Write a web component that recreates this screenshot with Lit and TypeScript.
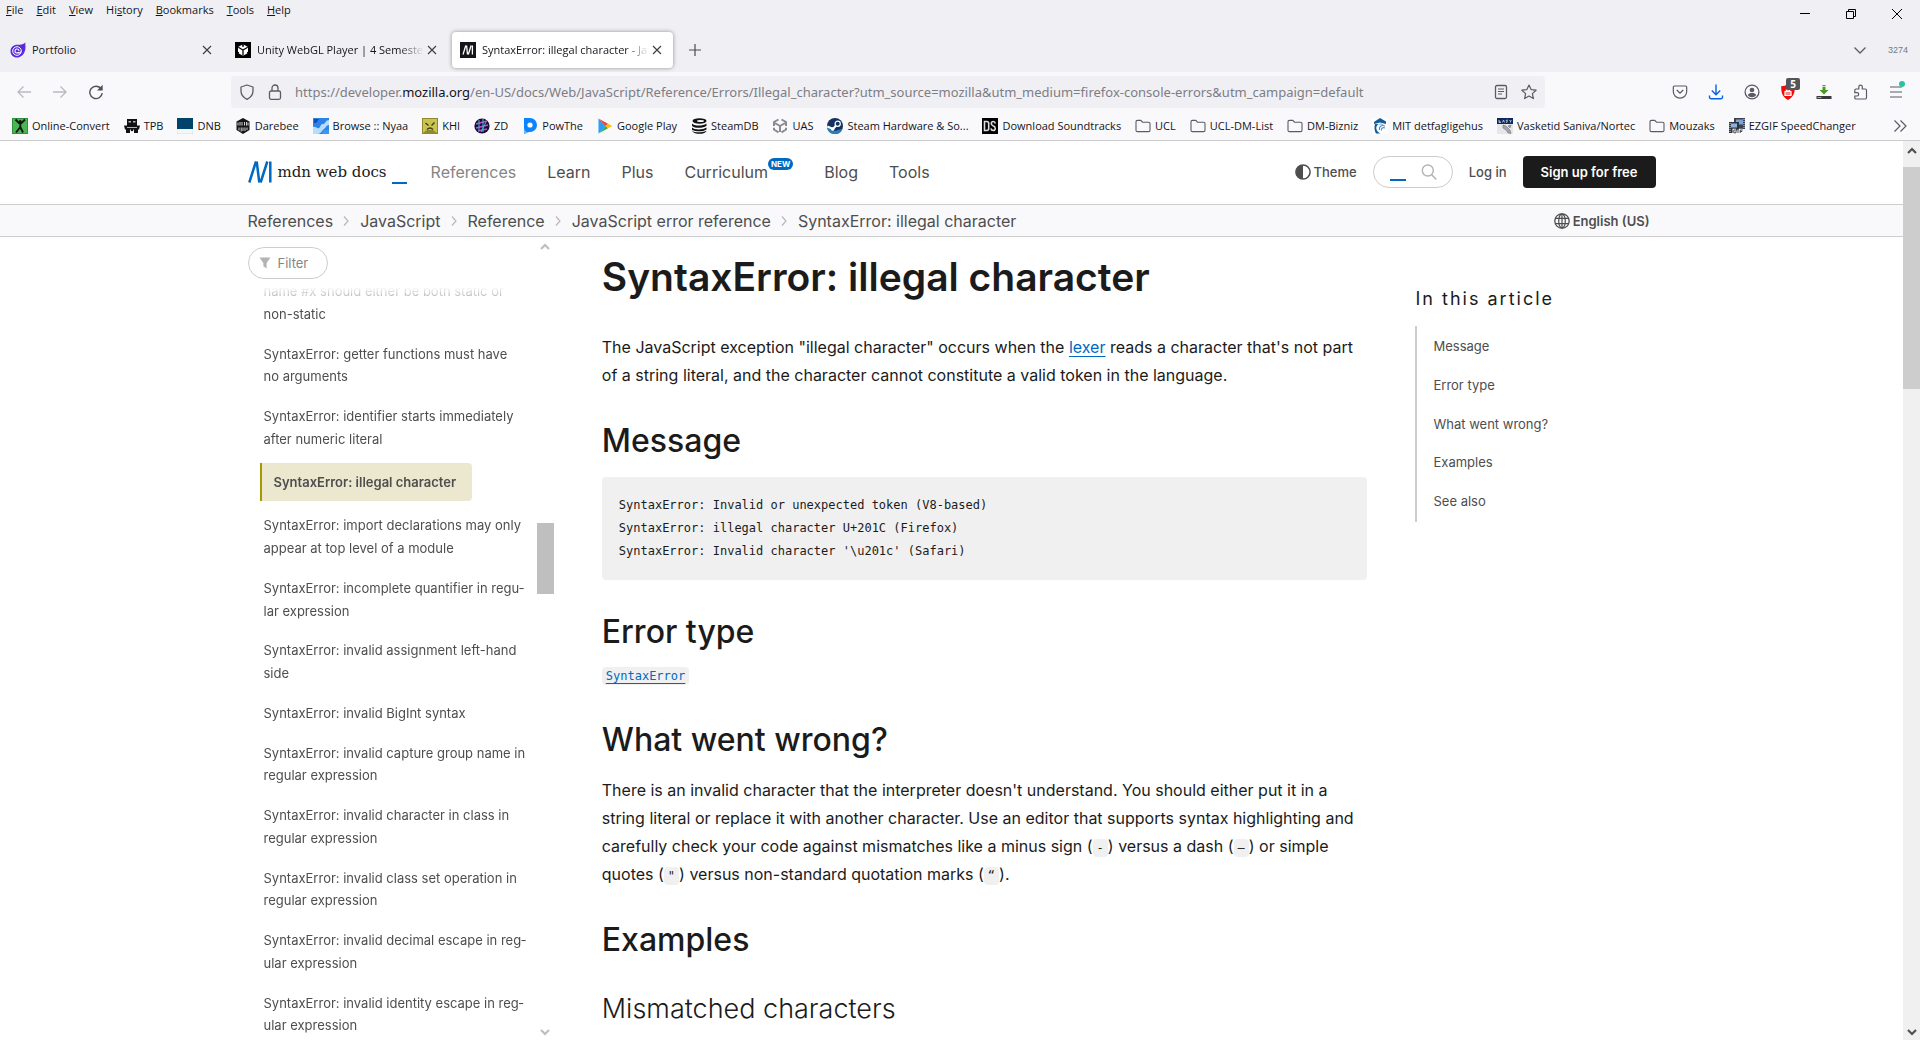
import { LitElement, html, css, svg, nothing } from "lit";
import { customElement } from "lit/decorators.js";

/* Site icons, all drawn on a 16 by 16 grid. */
const folder = svg`<path d="M1 3.8c0-.9.6-1.4 1.4-1.4h3.4l1.7 1.8h6.1c.8 0 1.4.6 1.4 1.4v6.6c0 .8-.6 1.4-1.4 1.4H2.4c-.8 0-1.4-.6-1.4-1.4z" fill="none" stroke="#5b5b66" stroke-width="1.1"/>`;
const icons: Record<string, unknown> = {
  portfolio: svg`<path d="M15.5.5c-.6 2 .6 4.600-.4 7.700C14.100 12.500 10.800 15.500 7 15.500 3.300 15.500.500 12.700.500 9.200.500 5.500 3.500 2.800 7.200 2.800 10.500 2.800 13 2.800 15.500.5z" fill="#5b2bd9"/><circle cx="7" cy="9" r="4.300" fill="none" stroke="#fff" stroke-width="1"/><path d="M9 9a2 2 0 1 0-.7 1.500c.8.8 2 .3 2.300-.8" fill="none" stroke="#fff" stroke-width="1.100"/>`,
  unity: svg`<rect width="16" height="16" fill="#000"/><path d="M8 2.300 13 5v6l-5 2.800L3 11V5z" fill="#fff"/><path d="M8 8v5.500M8 8 3.300 5.300M8 8l4.700-2.700" stroke="#000" stroke-width="1.300"/><path d="M7.200 2h1.600v2.500L8 5 7.200 4.500zM2.500 9.500l1.500.8v1.500L2.500 11zM13.500 9.500l-1.500.8v1.500l1.500-.8z" fill="#000"/>`,
  mdn: svg`<rect width="16" height="16" fill="#15141a"/><path d="M3 12.500 5.800 3.500M6.600 3.500l.9 9M8.300 12.500l2.800-9M12.400 3.500v9" stroke="#fff" stroke-width="1.300"/>`,
  convert: svg`<rect width="16" height="16" fill="#2f8f3a"/><rect x="1" y="1" width="14" height="14" fill="#4bb553"/><path d="M3.500 1.500 7 5h2.500L13 1.500M8.300 5v5M8 9.500 4 14.500M8.500 9.500l2.500 5" stroke="#0d1a0d" stroke-width="1.900" fill="none"/><circle cx="8.300" cy="3.300" r="1.300" fill="#0d1a0d"/>`,
  tpb: svg`<path d="M3 1h10v7H3z" fill="#111"/><path d="M4.500 3h2.500v1.500h-2.500zM9 3h2.500v1.500H9z" fill="#bbb"/><path d="M0 7.500h16l-1 4H1zM2 11h4v4H2zM10 11h4v4h-4z" fill="#111"/><path d="M3 9.500h10" stroke="#ddd" stroke-width=".8"/><circle cx="8" cy="12" r="1.300" fill="#111"/>`,
  dnb: svg`<rect width="16" height="16" fill="#f4f6f8"/><rect width="16" height="11" fill="#00446b"/><path d="M0 11v5h16v-5" fill="none" stroke="#c8d3dc" stroke-width=".6"/>`,
  darebee: svg`<path d="M8 0l6.500 3.500v8.500L8 16l-6.500-4V3.500z" fill="#151515"/><path d="M3 4.500v3M5 4v3.500M7 4v3.500M9.500 4v3.500M11.500 4v3.500M13 4.500v3M4 9.500v3M6.200 9.500v4M8 9.500v3.500M10 9.500v3.500M12 9.500v2.500" stroke="#e6e6e6" stroke-width=".9"/>`,
  nyaa: svg`<rect width="16" height="16" fill="#2b83e6"/><path d="M0 9c3-1 4 2 6 1s1-4 4-4 2-4 6-4v5c-3 0-3 3-5 4s-3 5-6 5H0z" fill="#b8dcff"/><path d="M1 1h5l-3 4H1z" fill="#0c4fb5"/><path d="M10 12h6v4h-7z" fill="#3b96f2"/>`,
  khi: svg`<rect width="16" height="16" fill="#8e8b2e"/><rect x="1" y="1" width="14" height="14" fill="#c9c452"/><path d="M3.500 5 6.500 7.500M12.500 4.500l-3 3M5 11.500c2-2 4-2 6 0" stroke="#3c3a10" stroke-width="1.300" fill="none"/><path d="M1 15l4-3h6l4 3z" fill="#8e8b2e"/>`,
  zd: svg`<circle cx="8" cy="8" r="7.600" fill="#16122b"/><path d="M2 6 13 3M2 10 14 7M4 13 13 11" stroke="#c04ad8" stroke-width="1.600"/><path d="M5 2v11M9 1v13M12 4 7 14" stroke="#41b8d6" stroke-width="1"/>`,
  powthe: svg`<path d="M2 0h6a7 7 0 0 1 0 14H6.500L2 16z" fill="#0a84ff"/><path d="M2 9c0 3 2 5 5 5l-5 2z" fill="#62b5ff"/><circle cx="8" cy="7" r="2.600" fill="#fff"/>`,
  play: svg`<path d="M1.500.5 8.500 8l-7 7.500z" fill="#2a9df4"/><path d="M1.500.5 11 5.700 8.500 8z" fill="#ea4335"/><path d="M1.500 15.500 11 10.300 8.500 8z" fill="#34a853"/><path d="M11 5.700 15.200 8 11 10.300 8.500 8z" fill="#fbbc04"/>`,
  steamdb: svg`<ellipse cx="8.500" cy="3" rx="7" ry="2.700" fill="#111"/><path d="M1 5.500c1 2.400 11 3 14.500 0v2.300C12 10.500 4 10.500 1 8zM1 9.500c2 2.500 11 2.500 14.500 0v2c-3.500 2.300-10 2.500-14.500.5zM1 13c3 1.700 10 1.700 14.500-.3-1 4-12 4.300-14.500.3z" fill="#111"/><ellipse cx="9.500" cy="3" rx="3.500" ry="1" fill="#f9f9fb"/>`,
  uas: svg`<path d="M8 8v6M8 8 2.800 5M8 8l5.200-3" stroke="#8b8b8f" stroke-width="2"/><path d="M6.500 1.500 2 4v4M9.500 1.500 14 4v4M2 9.800v1.700l4.500 2.800M14 9.800v1.700l-4.500 2.800" fill="none" stroke="#8b8b8f" stroke-width="2"/>`,
  steam: svg`<circle cx="8" cy="8" r="8" fill="#14315f"/><path d="M0 9a8 8 0 0 0 15.500 1.800L8 13z" fill="#2b7fb8"/><path d="M.3 8.500 6 11l4-4.500" stroke="#fff" stroke-width="2" fill="none"/><circle cx="10.700" cy="5.700" r="2.600" fill="#14315f" stroke="#fff" stroke-width="1.200"/><circle cx="5.700" cy="11" r="1.800" fill="#fff"/>`,
  ds: svg`<rect width="16" height="16" fill="#000"/><path d="M2.500 3.500h2.200c1.400 0 2 .8 2 2v5c0 1.200-.6 2-2 2H2.500zM13.300 5.500c-.3-1.300-1-2-2-2-2.600 0-2.600 3.600-.3 4.300 3 .8 3 4.700.2 4.700-1.300 0-2-.7-2.300-2" fill="none" stroke="#ddd" stroke-width="1.600"/>`,
  folder,
  mit: svg`<rect width="16" height="16" fill="#fff"/><path d="M2 4 8 0l6 3.500V6L8 4.500 2 6z" fill="#0f5c9c"/><path d="M12 6.500C8 4.500 4 7 4.300 10.500c.2 2 1.700 3.800 4 5L4 15.500C2.500 13 2 9 3 6z" fill="#0f5c9c"/><path d="M13 8C9.500 6.500 6.500 9 7.500 12M13 10c-2-1-4 .3-3.600 2.500" stroke="#4e8fc4" fill="none" stroke-width="1.200"/>`,
  easy: svg`<rect width="16" height="16" fill="#e5e7ea"/><rect width="16" height="6" fill="#10295c"/><path d="M2 2v2.500h2M2 3.300h1.500M5.500 4.500 6.500 2l1 2.500M11 2 9 2.500l1.500 1.500L9 4.500M12.500 2l1 1.200L14.500 2M13.500 3v1.500" stroke="#dfe6f3" stroke-width=".7" fill="none"/><path d="M6 7l3 1 4 4 1 3.500-3-.5-2-3-3-2zM11 8l3-1-1 3z" fill="#a2a6ac" stroke="#666" stroke-width=".5"/>`,
  ezgif: svg`<rect x="5" y="0" width="11" height="11" fill="#39424e"/><rect x="7" y="1.500" width="7" height="5" fill="#7fa3d4"/><rect x="0" y="4" width="10" height="11" fill="#2c343f"/><rect x="2" y="5.500" width="6" height="4" fill="#8fb0db"/><path d="M1 5v9M15 1v9" stroke="#dfe5ee" stroke-width="1" stroke-dasharray="1 1"/><path d="M7 12H4.800v2.800H7v-1.300M9 11.700v3.300M11.200 15v-3h2.500M11.200 13.500h2" stroke="#fff" stroke-width="2.600" fill="none"/><path d="M7 12H4.800v2.800H7v-1.300M9 11.700v3.300M11.200 15v-3h2.500M11.200 13.500h2" stroke="#333" stroke-width=".9" fill="none"/>`,
  close: svg`<path d="M4 4l8 8M12 4l-8 8" stroke="#3b3b44" stroke-width="1.100" fill="none"/>`,
  plus: svg`<path d="M8 2v12M2 8h12" stroke="#4a4a55" stroke-width="1.200"/>`,
  back: svg`<path d="M15 8H2M7.500 2.500 2 8l5.500 5.500" stroke="#b9b9c0" stroke-width="1.300" fill="none"/>`,
  forward: svg`<path d="M1 8h13M8.500 2.500 14 8l-5.500 5.500" stroke="#b9b9c0" stroke-width="1.300" fill="none"/>`,
  reload: svg`<path d="M13.200 5A6.200 6.200 0 1 0 14.200 9" stroke="#4f4f59" stroke-width="1.400" fill="none"/><path d="M14.700.8v5.700H9z" fill="#4f4f59"/>`,
  shield: svg`<path d="M8 1 14 3v4c0 4-2.300 6.500-6 8.300C4.300 13.500 2 11 2 7V3z" stroke="#5b5b66" stroke-width="1.300" fill="none" stroke-linejoin="round"/>`,
  lock: svg`<rect x="2.500" y="7" width="11" height="8.300" rx="1.500" stroke="#5b5b66" stroke-width="1.300" fill="none"/><path d="M5 7V4a3 3 0 0 1 6 0v3" stroke="#5b5b66" stroke-width="1.300" fill="none"/>`,
  reader: svg`<rect x="2.500" y="1.500" width="11" height="13" rx="1.500" stroke="#5b5b66" stroke-width="1.300" fill="none"/><path d="M5 5h6M5 7.500h6M5 10h4" stroke="#5b5b66" stroke-width="1.100"/>`,
  star: svg`<path d="M8 1l2.100 4.600 5 .6-3.700 3.400 1 5L8 12.100l-4.400 2.500 1-5L.900 6.200l5-.6z" stroke="#5b5b66" stroke-width="1.200" fill="none" stroke-linejoin="round"/>`,
  pocket: svg`<path d="M2.500 2h11c.8 0 1.200.5 1.200 1.200V7.500A6.700 6.700 0 0 1 8 14.200 6.700 6.700 0 0 1 1.300 7.500V3.200C1.300 2.500 1.700 2 2.500 2z" stroke="#5b5b66" stroke-width="1.200" fill="none"/><path d="M4.800 6 8 9.200 11.200 6" stroke="#5b5b66" stroke-width="1.300" fill="none"/>`,
  download: svg`<path d="M8 .5v10M3.800 6.500 8 10.700l4.200-4.200M1.500 11.500v1.800c0 .8.600 1.400 1.400 1.400h10.200c.8 0 1.400-.6 1.400-1.400v-1.800" stroke="#0561e6" stroke-width="1.400" fill="none"/>`,
  account: svg`<circle cx="8" cy="8" r="6.900" stroke="#5b5b66" stroke-width="1.300" fill="none"/><circle cx="8" cy="6" r="2.300" fill="#5b5b66"/><path d="M3.800 11.200c.6-1.600 2-2.200 4.200-2.200s3.600.6 4.200 2.200A5.500 5.500 0 0 1 8 13.300a5.500 5.500 0 0 1-4.200-2.100z" fill="#5b5b66"/>`,
  ublock: svg`<path d="M8 0c2 1.700 4.500 2.200 6.800 2.200 0 6.500-.8 10.300-6.800 13.800C2 12.500 1.200 8.700 1.200 2.200 3.500 2.200 6 1.700 8 0z" fill="#f00a0a"/><path d="M5 7.500h6v4H5zM6.300 7.500V6h3.400v1.500" stroke="#fff" stroke-width="1.200" fill="#fff" fill-opacity=".5"/>`,
  dlgreen: svg`<path d="M6.500 1h3v1.200h-3zM6.500 3h3v3h3L8 10.500 3.500 6h3z" fill="#4c9a1f"/><rect x=".5" y="12" width="15" height="3" fill="#38383d"/><path d="M1.500 13.500h4" stroke="#aaa" stroke-width="1"/>`,
  puzzle: svg`<path d="M6.800 5V2.700c0-2.200 3.500-2.200 3.500 0V5h3c.7 0 1.200.5 1.200 1.200v7.600c0 .7-.5 1.200-1.200 1.200H4c-.7 0-1.200-.5-1.200-1.200V12h2.300c2.100 0 2.100-3.300 0-3.300H2.800V6.200C2.800 5.500 3.300 5 4 5z" stroke="#5b5b66" stroke-width="1.200" fill="none"/>`,
  menu: svg`<path d="M2 3h12M2 8h12M2 13h12" stroke="#5b5b66" stroke-width="1.200"/>`,
  down: svg`<path d="M2.500 5.500 8 11l5.500-5.500" stroke="#5b5b66" stroke-width="1.300" fill="none"/>`,
  more: svg`<path d="M2.500 2.500 8 8l-5.500 5.500M8.500 2.500 14 8l-5.500 5.500" stroke="#5b5b66" stroke-width="1.200" fill="none"/>`,
  min: svg`<path d="M3 7.500h10" stroke="#000"/>`,
  restore: svg`<path d="M3.500 5.500h7v7h-7zM5.500 5.500v-2h7v7h-2" stroke="#000" fill="none"/>`,
  winclose: svg`<path d="M3 3l10 10M13 3 3 13" stroke="#000" stroke-width="1" fill="none"/>`,
  theme: svg`<circle cx="8" cy="8" r="7.100" stroke="#4e4e4e" stroke-width="1.500" fill="none"/><path d="M8 1a7 7 0 0 0 0 14z" fill="#4e4e4e"/>`,
  search: svg`<circle cx="6.800" cy="6.500" r="5.500" stroke="#b3b3b3" stroke-width="1.400" fill="none"/><path d="M10.700 10.700 15.300 15.500" stroke="#b3b3b3" stroke-width="1.500"/>`,
  globe: svg`<circle cx="8" cy="8" r="7.200" stroke="#4e4e4e" stroke-width="1.300" fill="none"/><ellipse cx="8" cy="8" rx="3.300" ry="7.200" stroke="#4e4e4e" stroke-width="1.200" fill="none"/><path d="M8 1v14M1.500 5.300h13M1.500 10.700h13" stroke="#4e4e4e" stroke-width="1.200"/>`,
  funnel: svg`<path d="M2.500 2.500h11L9.600 8v5.500L6.400 11.200V8z" fill="#b3b3b3"/>`,
  crumb: svg`<path d="M6 3.500 10 8l-4 4.500" stroke="#b8b8b8" stroke-width="1.200" fill="none"/>`,
  up: svg`<path d="M4 11l4-4 4 4" stroke="currentColor" stroke-width="2.200" fill="none"/>`,
  dn: svg`<path d="M4 6l4 4 4-4" stroke="currentColor" stroke-width="2.200" fill="none"/>`,
};
const icon = (name: string) =>
  html`<svg class="icon" width="16" height="16" viewBox="0 0 16 16" aria-hidden="true">${icons[name]}</svg>`;

const base = css`
  *, *::before, *::after { box-sizing: border-box; }
  button { border: 0; padding: 0; background: none; font: inherit; color: inherit; }
  a { color: inherit; text-decoration: none; }
  ul, ol { list-style: none; margin: 0; padding: 0; }
  .icon { display: block; flex: none; }
`;

@customElement("browser-chrome")
export class BrowserChrome extends LitElement {
  static styles = [base, css`
    :host { display: block; font: 11px/16px "Open Sans", "Segoe UI", sans-serif; color: #15141a; border-bottom: 1px solid #ccc; }
    .top { background: #f0f0f4; height: 72px; display: flex; flex-direction: column; }
    .titlebar { display: flex; justify-content: space-between; height: 28px; }
    .menus { display: flex; gap: 13px; padding: 2px 6px; align-items: flex-start; }
    .window { display: flex; align-items: center; gap: 30px; padding-right: 15px; }
    .tabrow { display: flex; align-items: center; justify-content: space-between; padding: 4px 12px 4px 2px; }
    .tabs { display: flex; gap: 4px; align-items: center; }
    .tab { width: 221px; height: 36px; display: flex; align-items: center; padding: 0 8px; border-radius: 4px; gap: 6px; }
    .tab.selected { background: #fff; box-shadow: 0 0 4px rgba(0, 0, 0, .4); }
    .tab .label { flex: 1; overflow: hidden; white-space: nowrap; }
    .tab .label.long { mask-image: linear-gradient(to left, transparent, #000 24px); }
    .tab .shut { margin-left: -6px; }
    .new { margin-left: 10px; }
    .tabtools { display: flex; align-items: center; gap: 20px; }
    .counter { font: 9px/12px "Liberation Sans Narrow", "Liberation Sans", sans-serif; color: #77777f; }
    .nav { background: #f9f9fb; display: grid; grid-template-columns: 215px minmax(0, 1fr) 343px; gap: 16px; padding: 4px 16px 4px 0; height: 40px; align-items: center; }
    .history { display: flex; gap: 20px; padding-left: 16px; }
    .tools { display: flex; justify-content: space-between; padding-left: 111px; }
    .url { background: #f0f0f4; border-radius: 4px; height: 32px; display: flex; align-items: center; gap: 12px; padding: 0 8px; color: #7d7d84; font-family: "Noto Sans", sans-serif; font-size: 13px; }
    .address { flex: 1; min-width: 0; overflow: hidden; white-space: nowrap; outline: 0; }
    .address b { font-weight: 400; color: #15141a; }
    .badged { position: relative; }
    .count { position: absolute; left: 6px; top: -6px; width: 14px; height: 12px; border-radius: 2px; background: #55555a; color: #fff; font: 700 10px/12px "Open Sans", sans-serif; text-align: center; }
    .dot { position: absolute; right: -1px; top: -3px; width: 6px; height: 6px; border-radius: 50%; background: #2ac3a2; }
    .marks { background: #f9f9fb; display: flex; align-items: center; justify-content: space-between; height: 28px; padding: 0 12px; }
    .marks ul { display: flex; flex: 1; justify-content: space-between; margin-right: 36px; }
    .marks li a { display: flex; align-items: center; gap: 4px; white-space: nowrap; }
  `];
  private menus = [["", "F", "ile"], ["", "E", "dit"], ["", "V", "iew"], ["Hi", "s", "tory"], ["", "B", "ookmarks"], ["", "T", "ools"], ["", "H", "elp"]];
  private tabs = [
    { icon: "portfolio", label: "Portfolio" },
    { icon: "unity", label: "Unity WebGL Player | 4 Semester", long: true },
    { icon: "mdn", label: "SyntaxError: illegal character - JavaScript | MDN", long: true, selected: true },
  ];
  private marks = [
    ["convert", "Online-Convert"], ["tpb", "TPB"], ["dnb", "DNB"], ["darebee", "Darebee"], ["nyaa", "Browse :: Nyaa"], ["khi", "KHI"],
    ["zd", "ZD"], ["powthe", "PowThe"], ["play", "Google Play"], ["steamdb", "SteamDB"], ["uas", "UAS"], ["steam", "Steam Hardware & So..."],
    ["ds", "Download Soundtracks"], ["folder", "UCL"], ["folder", "UCL-DM-List"], ["folder", "DM-Bizniz"], ["mit", "MIT detfagligehus"],
    ["easy", "Vasketid Saniva/Nortec"], ["folder", "Mouzaks"], ["ezgif", "EZGIF SpeedChanger"],
  ];
  private tool(name: string, label: string, extra: unknown = nothing) {
    return html`<button class="badged" aria-label=${label}>${icon(name)}${extra}</button>`;
  }
  render() {
    return html`
      <div class="top">
        <div class="titlebar">
          <div class="menus">${this.menus.map(([a, b, c]) => html`<button>${a}<u>${b}</u>${c}</button>`)}</div>
          <div class="window">${this.tool("min", "Minimize")}${this.tool("restore", "Restore")}${this.tool("winclose", "Close")}</div>
        </div>
        <div class="tabrow">
          <div class="tabs">
            ${this.tabs.map(t => html`<div class="tab ${t.selected ? "selected" : ""}">${icon(t.icon)}<span class="label ${t.long ? "long" : ""}">${t.label}</span><button class="shut" aria-label="Close tab">${icon("close")}</button></div>`)}
            <button class="new" aria-label="New tab">${icon("plus")}</button>
          </div>
          <div class="tabtools">${this.tool("down", "List all tabs")}<span class="counter">3274</span></div>
        </div>
      </div>
      <div class="nav">
        <div class="history">${this.tool("back", "Back")}${this.tool("forward", "Forward")}${this.tool("reload", "Reload")}</div>
        <div class="url">
          ${icon("shield")}${icon("lock")}
          <div class="address" role="textbox" aria-label="Address" contenteditable="true" spellcheck="false">https://developer.<b>mozilla.org</b>/en-US/docs/Web/JavaScript/Reference/Errors/Illegal_character?utm_source=mozilla&amp;utm_medium=firefox-console-errors&amp;utm_campaign=default</div>
          ${this.tool("reader", "Reader view")}${this.tool("star", "Bookmark this page")}
        </div>
        <div class="tools">
          ${this.tool("pocket", "Save to Pocket")}${this.tool("download", "Downloads")}${this.tool("account", "Account")}
          ${this.tool("ublock", "Content blocker", html`<span class="count">5</span>`)}
          ${this.tool("dlgreen", "Download helper")}${this.tool("puzzle", "Extensions")}
          ${this.tool("menu", "Application menu", html`<span class="dot"></span>`)}
        </div>
      </div>
      <nav class="marks" aria-label="Bookmarks">
        <ul>${this.marks.map(([i, t]) => html`<li><a href="#">${icon(i)}${t}</a></li>`)}</ul>
        ${this.tool("more", "More bookmarks")}
      </nav>`;
  }
}

@customElement("scroll-bar")
export class ScrollBar extends LitElement {
  static properties = { before: { type: Number }, thumb: { type: Number }, after: { type: Number } };
  declare before: number;
  declare thumb: number;
  declare after: number;
  static styles = [base, css`
    :host { display: flex; flex-direction: column; width: 17px; color: #505050; background: #f0f0f0; --thumb: #cdcdcd; }
    :host([quiet]) { color: #bfbfbf; background: none; --thumb: #bfbfbf; }
    .arrow { height: 17px; display: grid; place-items: center; }
    .thumb { background: var(--thumb); }
  `];
  render() {
    return html`<div class="arrow">${icon("up")}</div>
      <div style="flex:${this.before}"></div><div class="thumb" style="flex:${this.thumb}"></div><div style="flex:${this.after}"></div>
      <div class="arrow">${icon("dn")}</div>`;
  }
}

@customElement("site-header")
export class SiteHeader extends LitElement {
  static styles = [base, css`
    :host { display: block; font: 16px/28px Inter, sans-serif; color: #4e4e4e; }
    .wrap { max-width: 1440px; margin: 0 auto; padding: 0 16px; display: flex; align-items: center; justify-content: space-between; }
    .main { border-bottom: 1px solid #cdcdcd; background: #fff; }
    .main .wrap { height: 63px; padding-bottom: 1px; }
    .crumbs { border-bottom: 1px solid #cdcdcd; background: #f9f9fb; }
    .crumbs .wrap { height: 31px; padding-right: 22px; }
    .left, .links, .right, .trail { display: flex; align-items: center; }
    .left { gap: 24px; }
    .logo { display: flex; align-items: center; color: #1b1b1b; font: 15px/24px "DejaVu Serif", serif; gap: 6px; }
    .word { display: flex; align-items: flex-end; }
    .under { width: 15px; height: 2px; background: #0069c2; margin-left: 5px; }
    .links { gap: 31px; }
    .links a { display: flex; align-items: flex-start; }
    .links .current { color: #858585; }
    .new { background: #0069c2; color: #fff; font: 700 8px/12px Inter, sans-serif; padding: 0 3px; border-radius: 6px; }
    .right { gap: 16px; font-size: 13px; font-weight: 500; }
    .right button, .lang { display: flex; align-items: center; gap: 3px; }
    .search { display: flex; align-items: center; width: 80px; height: 32px; border: 1px solid #cdcdcd; border-radius: 16px; padding: 0 15px 0 16px; position: relative; }
    .search input { flex: 1; min-width: 0; border: 0; background: none; outline: 0; padding: 0; }
    .caret { position: absolute; left: 16px; bottom: 6px; width: 16px; height: 2px; background: #0069c2; }
    .right .signup { background: #1b1b1b; color: #fff; font-weight: 600; height: 32px; padding: 0 18px; border-radius: 4px; }
    .trail { gap: 5px; }
    .trail li { display: flex; align-items: center; gap: 6px; }
    .lang { font-size: 13px; font-weight: 600; }
  `];
  render() {
    const trail = ["References", "JavaScript", "Reference", "JavaScript error reference", "SyntaxError: illegal character"];
    return html`
      <header class="main"><div class="wrap">
        <div class="left">
          <a class="logo" href="#">
            <svg width="24" height="22" viewBox="0 0 24 22" aria-hidden="true"><path d="M1.300 21.500 8 .5M8.700.5l2.600 21M12.600 21.500l6.700-21M22.300.5v21" stroke="#0069c2" stroke-width="2.500" fill="none"/></svg>
            <span class="word">mdn web docs<span class="under"></span></span>
          </a>
          <nav class="links">
            <a class="current" href="#">References</a><a href="#">Learn</a><a href="#">Plus</a>
            <a href="#">Curriculum<span class="new">NEW</span></a><a href="#">Blog</a><a href="#">Tools</a>
          </nav>
        </div>
        <div class="right">
          <button>${icon("theme")}Theme</button>
          <label class="search"><input type="search" aria-label="Search MDN"><span class="caret"></span>${icon("search")}</label>
          <a href="#">Log in</a>
          <button class="signup">Sign up for free</button>
        </div>
      </div></header>
      <div class="crumbs"><div class="wrap">
        <ol class="trail">${trail.map((t, i) => html`<li>${i ? icon("crumb") : nothing}<a href="#">${t}</a></li>`)}</ol>
        <button class="lang">${icon("globe")}English (US)</button>
      </div></div>`;
  }
}

@customElement("error-sidebar")
export class ErrorSidebar extends LitElement {
  static styles = [base, css`
    :host { display: flex; min-height: 0; font: 13px/1.75 Inter, sans-serif; color: #4e4e4e; }
    .body { flex: 1; min-width: 0; display: flex; flex-direction: column; overflow: hidden; padding-top: 10px; }
    .filter { flex: none; width: 80px; height: 32px; display: flex; align-items: center; gap: 5px; border: 1px solid #cdcdcd; border-radius: 16px; padding: 0 8px; }
    .filter input { width: 100%; min-width: 0; border: 0; padding: 0; outline: 0; background: none; font: inherit; }
    .filter input::placeholder { color: #858585; opacity: 1; }
    .list { flex: 1; min-height: 0; overflow: hidden; padding: 0 6px 0 16px; mask-image: linear-gradient(transparent 8px, #000 32px); }
    li { padding: 8px 0; margin-bottom: 1px; }
    li:first-child { padding-top: 1px; }
    li.current { width: fit-content; margin: 4px 0 5px -4px; padding: 8px 16px 8px 12px; border-left: 2px solid #a39b00; border-radius: 0 4px 4px 0; background: #ece8cf; font-weight: 600; }
  `];
  private entries = [
    "name #x should either be both static or non-static",
    "SyntaxError: getter functions must have no\u00a0arguments",
    "SyntaxError: identifier starts immediately after numeric literal",
    "SyntaxError: illegal character",
    "SyntaxError: import declarations may only appear at top level of a module",
    "SyntaxError: incomplete quantifier in regu\u00adlar expression",
    "SyntaxError: invalid assignment left-hand side",
    "SyntaxError: invalid BigInt syntax",
    "SyntaxError: invalid capture group name in regular expression",
    "SyntaxError: invalid character in class in regular expression",
    "SyntaxError: invalid class set operation in regular expression",
    "SyntaxError: invalid decimal escape in reg\u00adular expression",
    "SyntaxError: invalid identity escape in reg\u00adular expression",
  ];
  render() {
    return html`
      <div class="body">
        <label class="filter">${icon("funnel")}<input type="text" placeholder="Filter" aria-label="Filter"></label>
        <ul class="list">${this.entries.map((t, i) => html`<li class=${i === 3 ? "current" : ""}><a href="#">${t}</a></li>`)}</ul>
      </div>
      <scroll-bar quiet before="269" thumb="71" after="429"></scroll-bar>`;
  }
}

@customElement("doc-article")
export class DocArticle extends LitElement {
  static styles = [base, css`
    :host { display: block; min-width: 0; padding-top: 16px; font: 16px/28px Inter, sans-serif; color: #1b1b1b; }
    h1, h2, h3, p, pre { margin: 0; }
    h1 { font-size: 39px; line-height: 48px; font-weight: 600; margin-bottom: 32px; }
    h2 { font-size: 32px; line-height: 40px; font-weight: 500; margin: 32px 0 16px; }
    h3 { font-size: 27px; line-height: 34px; font-weight: 300; margin-top: 32px; }
    pre, code { font-family: "DejaVu Sans Mono", Consolas, monospace; background: #f0f0f0; border-radius: 4px; }
    pre { font-size: 12px; line-height: 23px; padding: 17px; }
    code { font-size: 12px; line-height: 16px; padding: 2px 4px; }
    a { color: #0069c2; text-decoration: underline; text-underline-offset: 3px; }
    .type { margin-top: -8px; }
  `];
  render() {
    return html`
      <h1>SyntaxError: illegal character</h1>
      <p>The JavaScript exception "illegal character" occurs when the <a href="#">lexer</a> reads a character that's not part of a string literal, and the character cannot constitute a valid token in the language.</p>
      <h2>Message</h2>
      <pre>${["SyntaxError: Invalid or unexpected token (V8-based)", "SyntaxError: illegal character U+201C (Firefox)", "SyntaxError: Invalid character '\\u201c' (Safari)"].join("\n")}</pre>
      <h2>Error type</h2>
      <p class="type"><code><a href="#">SyntaxError</a></code></p>
      <h2>What went wrong?</h2>
      <p>There is an invalid character that the interpreter doesn't understand. You should either put it in a string literal or replace it with another character. Use an editor that supports syntax highlighting and carefully check your code against mismatches like a minus sign (<code>-</code>) versus a dash (<code>–</code>) or simple quotes (<code>"</code>) versus non-standard quotation marks (<code>“</code>).</p>
      <h2>Examples</h2>
      <h3>Mismatched characters</h3>`;
  }
}

@customElement("article-toc")
export class ArticleToc extends LitElement {
  static styles = [base, css`
    :host { display: block; padding-top: 48px; font: 13px/1.75 Inter, sans-serif; color: #4e4e4e; }
    h2 { margin: 0 0 13px; font-size: 18px; line-height: 28px; font-weight: 400; letter-spacing: 2px; color: #1b1b1b; }
    ul { border-left: 2px solid #cdcdcd; padding: 1px 0; }
    li { padding: 8px 16px; }
  `];
  render() {
    return html`<h2>In this article</h2>
      <ul>${["Message", "Error type", "What went wrong?", "Examples", "See also"].map(t => html`<li><a href="#">${t}</a></li>`)}</ul>`;
  }
}

@customElement("app-root")
export class AppRoot extends LitElement {
  static styles = [base, css`
    :host { display: flex; flex-direction: column; height: 100vh; overflow: hidden; background: #fff; }
    browser-chrome { flex: none; }
    .view { flex: 1; min-height: 0; display: flex; }
    .page { flex: 1; min-width: 0; display: flex; flex-direction: column; overflow: hidden; }
    site-header { flex: none; }
    .columns { flex: 1; min-height: 0; width: 100%; max-width: 1440px; margin: 0 auto; padding: 0 16px; display: grid; grid-template-columns: minmax(0, 1fr) minmax(0, 2.5fr) 240px; grid-template-rows: minmax(0, 1fr); gap: 48px; }
  `];
  render() {
    return html`
      <browser-chrome></browser-chrome>
      <div class="view">
        <div class="page">
          <site-header></site-header>
          <div class="columns">
            <error-sidebar></error-sidebar>
            <doc-article></doc-article>
            <article-toc></article-toc>
          </div>
        </div>
        <scroll-bar before="9" thumb="222" after="634"></scroll-bar>
      </div>`;
  }
}
